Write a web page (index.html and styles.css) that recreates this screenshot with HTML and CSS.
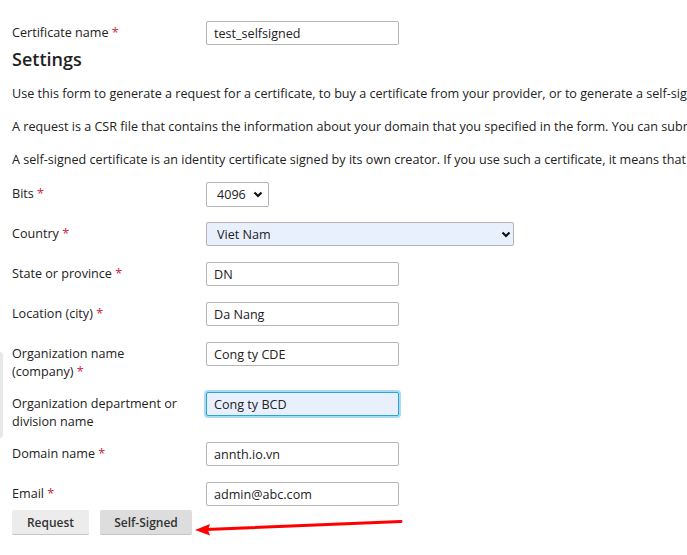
FILE: index.html
```html
<!DOCTYPE html>
<html>
<head>
<meta charset="utf-8">
<link rel="stylesheet" href="styles.css">
</head>
<body>
<div class="page">
  <div class="row row-first">
    <label class="lbl">Certificate name <span class="req">*</span></label>
    <input class="inp" type="text" value="test_selfsigned">
  </div>
  <h2 class="heading">Settings</h2>
  <div class="descs">
    <p class="desc">Use this form to generate a request for a certificate, to buy a certificate from your provider, or to generate a self-signed certificate.</p>
    <p class="desc">A request is a CSR file that contains the information about your domain that you specified in the form. You can submit the request to a certificate authority.</p>
    <p class="desc">A self-signed certificate is an identity certificate signed by its own creator. If you use such a certificate, it means that you vouch for your identity yourself.</p>
  </div>

  <div class="row row-bits">
    <label class="lbl">Bits <span class="req">*</span></label>
    <select class="sel sel-bits"><option>4096</option></select>
  </div>
  <div class="row">
    <label class="lbl">Country <span class="req">*</span></label>
    <select class="sel sel-country"><option>Viet Nam</option></select>
  </div>
  <div class="row">
    <label class="lbl">State or province <span class="req">*</span></label>
    <input class="inp" type="text" value="DN">
  </div>
  <div class="row row-loc">
    <label class="lbl">Location (city) <span class="req">*</span></label>
    <input class="inp" type="text" value="Da Nang">
  </div>
  <div class="row tall">
    <label class="lbl">Organization name<br>(company) <span class="req">*</span></label>
    <input class="inp" type="text" value="Cong ty CDE">
  </div>
  <div class="row tall">
    <label class="lbl">Organization department or<br>division name</label>
    <input class="inp focused" type="text" value="Cong ty BCD">
  </div>
  <div class="row">
    <label class="lbl">Domain name <span class="req">*</span></label>
    <input class="inp" type="text" value="annth.io.vn">
  </div>
  <div class="row row-last">
    <label class="lbl">Email <span class="req">*</span></label>
    <input class="inp" type="text" value="admin@abc.com">
  </div>
  <div class="buttons">
    <button class="btn btn-request">Request</button>
    <button class="btn btn-hover">Self-Signed</button>
  </div>
</div>
<div class="side-tab"></div>
<svg class="arrow" width="687" height="555" viewBox="0 0 687 555">
  <line x1="401" y1="521.5" x2="206" y2="529.5" stroke="#f00" stroke-width="3" stroke-linecap="round"/>
  <polygon points="195,530 210,524 208,530 210,535.5" fill="#f00"/>
</svg>
</body>
</html>
```

FILE: styles.css
```css
html, body {
  margin: 0;
  padding: 0;
  background: #fff;
  overflow: hidden;
}
body {
  font-family: "Open Sans", "DejaVu Sans", sans-serif;
  font-size: 12.6px;
  color: #222;
  width: 687px;
  height: 555px;
  position: relative;
}
.page {
  padding: 21px 0 0 12px;
}
.row {
  display: flex;
  align-items: flex-start;
  margin-bottom: 16px;
}
.row-first {
  margin-bottom: 3px;
}
.row.tall {
  height: 34px;
}
.row-bits {
  margin-bottom: 15px;
}
.row-last {
  margin-bottom: 4px;
}
.lbl {
  width: 194px;
  flex: none;
  line-height: 18px;
  padding-top: 3px;
}
.req {
  color: #c9243f;
}
.inp {
  box-sizing: border-box;
  width: 193px;
  height: 24px;
  border: 1px solid #b5b5b5;
  border-radius: 2px;
  padding: 0 7px;
  margin: 0;
  font-family: "Open Sans", sans-serif;
  font-size: 12.6px;
  color: #222;
  background: #fff;
  outline: none;
}
.inp.focused {
  background: #e8f0fe;
  border: 1px solid #27a4de;
  box-shadow: 0 0 0 2px #a9dcf3;
}
.sel {
  box-sizing: border-box;
  height: 24px;
  border: 1px solid #b5b5b5;
  border-radius: 2px;
  margin: 0;
  font-family: "Open Sans", sans-serif;
  font-size: 12.6px;
  color: #222;
  appearance: none;
  -webkit-appearance: none;
  background-color: #fff;
  background-image: url("data:image/svg+xml;utf8,<svg xmlns='http://www.w3.org/2000/svg' width='10' height='7' viewBox='0 0 10 7'><path d='M1.5 1.5 L5 5 L8.5 1.5' fill='none' stroke='%23111' stroke-width='2.2'/></svg>");
  background-repeat: no-repeat;
  outline: none;
}
.sel-bits {
  width: 63px;
  height: 25px;
  padding: 0 0 0 10px;
  background-position: right 5px center;
}
.sel-country {
  width: 308px;
  padding: 0 0 0 10px;
  background-color: #e8f0fe;
  background-position: right 2px center;
}
.heading {
  margin: 0 0 14px 0;
  font-size: 18px;
  line-height: 23px;
  font-weight: 600;
  color: #222;
}
.descs {
  display: flex;
  flex-direction: column;
  gap: 15px;
  margin-bottom: 13px;
}
.desc {
  margin: 0;
  line-height: 18px;
  white-space: nowrap;
}
.buttons {
  display: flex;
  gap: 11px;
}
.btn {
  box-sizing: border-box;
  height: 25px;
  padding: 0;
  border: none;
  border-bottom: 1px solid #c4c4c4;
  border-radius: 2px;
  background: #ececec;
  font-family: "Open Sans", sans-serif;
  font-size: 12px;
  font-weight: 600;
  color: #333;
}
.btn-request {
  width: 77px;
}
.btn-hover {
  width: 92px;
  background: #dddddd;
}
.side-tab {
  position: absolute;
  left: 0;
  top: 352px;
  width: 3px;
  height: 86px;
  background: #e8e8e8;
  border-radius: 0 3px 3px 0;
}
.arrow {
  position: absolute;
  left: 0;
  top: 0;
  pointer-events: none;
}
```
